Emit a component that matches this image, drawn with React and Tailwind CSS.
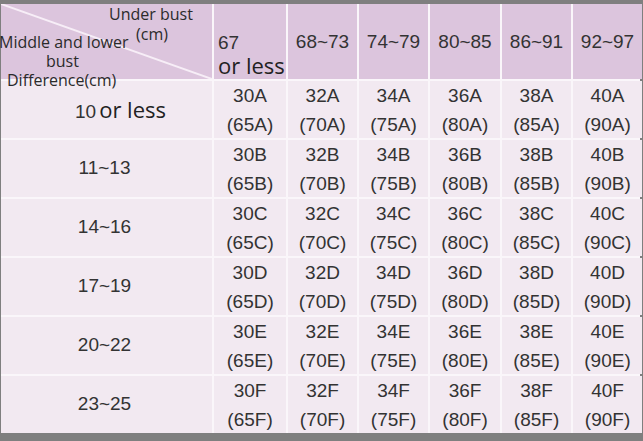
import React from 'react'

const sizes = ['30', '32', '34', '36', '38', '40']
const under = ['65', '70', '75', '80', '85', '90']
const cups = ['A', 'B', 'C', 'D', 'E', 'F']
const diffs = ['10', '11~13', '14~16', '17~19', '20~22', '23~25']
const ranges = ['68~73', '74~79', '80~85', '86~91', '92~97']

const App = () => {
  return (
    <div className="w-[643px] h-[441px] bg-[#7f7f7f] pt-[4px] pl-[1px] pr-[3px] pb-[8px] overflow-hidden">
      <div className="grid grid-cols-[211px_72px_69px_69px_70px_69px_69px] grid-rows-[75px_repeat(6,57px)] gap-[2px] bg-[#faf6fa] font-['Liberation_Sans',Arial,sans-serif] text-[19px] text-[#333]">
        {/* Corner cell */}
        <div className="relative bg-[#dcc5dd] font-['Open_Sans',sans-serif] text-[16px] leading-[18px] text-[#2b2b2b] z-10">
          <svg className="absolute inset-0" width="211" height="75" viewBox="0 0 211 75">
            <line x1="0" y1="0" x2="211" y2="75" stroke="#f7eef7" strokeWidth="2" />
          </svg>
          <span className="absolute left-[108px] top-[1px] whitespace-nowrap">Under bust</span>
          <span className="absolute left-[135px] top-[21px]">(cm)</span>
          <span className="absolute left-[-2px] top-[29px] whitespace-nowrap">Middle and lower</span>
          <span className="absolute left-[45px] top-[48px]">bust</span>
          <span className="absolute left-[6px] top-[67px] whitespace-nowrap">Difference(cm)</span>
        </div>

        {/* Header */}
        <div className="bg-[#dcc5dd] flex flex-col pl-[4px] pt-[29px]">
          <span className="leading-[19px]">67</span>
          <span className="font-['Open_Sans',sans-serif] text-[22px] leading-[22px] mt-[2px] text-[#222] whitespace-nowrap">or less</span>
        </div>
        {ranges.map((r) => (
          <div key={r} className="bg-[#dcc5dd] flex items-center justify-center pt-[2px]">
            {r}
          </div>
        ))}

        {/* Body rows */}
        {cups.map((c, i) => (
          <React.Fragment key={c}>
            <div className={`bg-[#f2e9f1] flex items-center justify-center ${i === 0 ? 'pl-[28px]' : 'pr-[4px]'}`}>
              {i === 0 ? (
                <span className="flex items-baseline">
                  10<span className="ml-[3px] font-['Open_Sans',sans-serif] text-[22px] text-[#222]">or less</span>
                </span>
              ) : (
                diffs[i]
              )}
            </div>
            {sizes.map((s, j) => (
              <div key={s} className="bg-[#f2e9f1] flex flex-col items-center justify-center leading-[29px]">
                <span>{s}{c}</span>
                <span>({under[j]}{c})</span>
              </div>
            ))}
          </React.Fragment>
        ))}
      </div>
    </div>
  )
}

export default App
